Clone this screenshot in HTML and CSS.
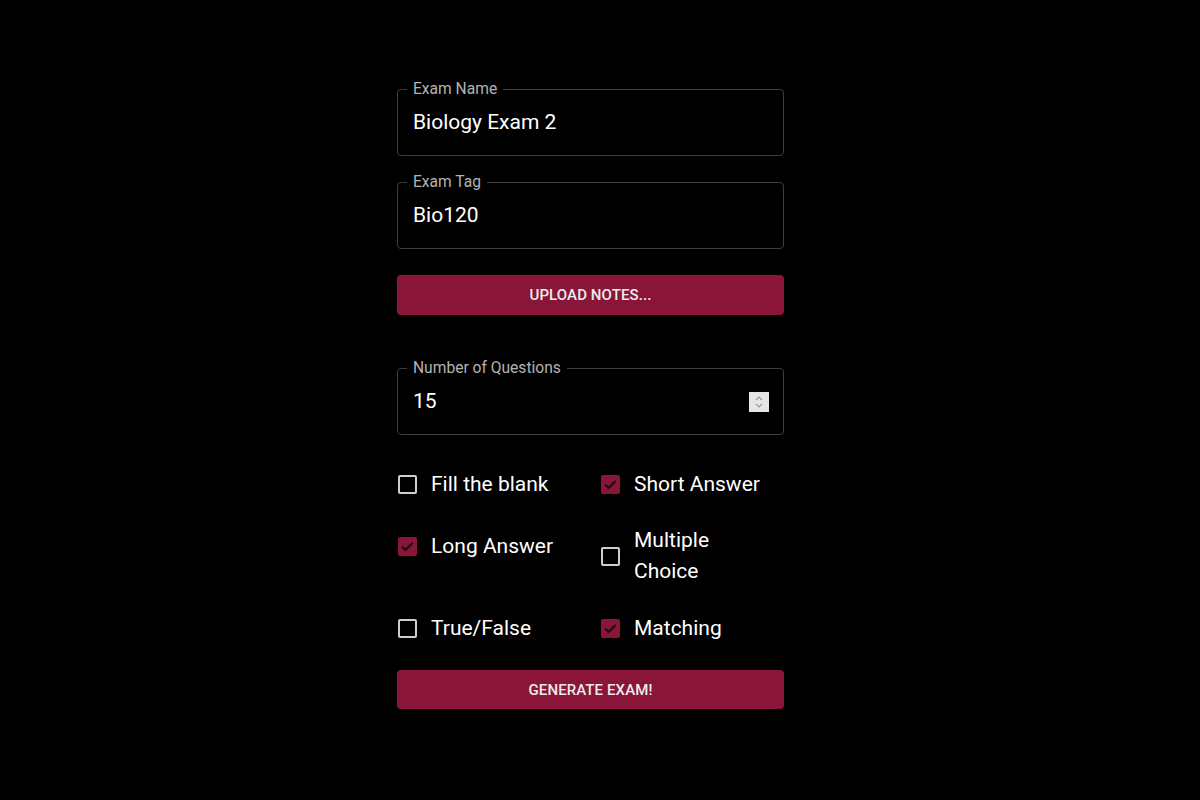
FILE: index.html
```html
<!DOCTYPE html>
<html lang="en">
<head>
    <meta charset="UTF-8">
    <meta name="viewport" content="width=device-width, initial-scale=1.0">
    <title>Exam Generator</title>
    <link rel="stylesheet" href="styles.css">
</head>
<body>
    <form class="exam-form">
        <fieldset class="field">
            <legend>Exam Name</legend>
            <input class="field-input" type="text" value="Biology Exam 2">
        </fieldset>

        <fieldset class="field field-tag">
            <legend>Exam Tag</legend>
            <input class="field-input" type="text" value="Bio120">
        </fieldset>

        <button type="button" class="btn btn-upload">Upload Notes...</button>

        <fieldset class="field field-count">
            <legend>Number of Questions</legend>
            <div class="number-row">
                <input class="field-input" type="text" value="15">
                <span class="spinner">
                    <svg width="20" height="20" viewBox="0 0 20 20">
                        <polyline points="7,8 10,5 13,8" fill="none" stroke="#9a9a9a" stroke-width="1.2"/>
                        <polyline points="7,12 10,15 13,12" fill="none" stroke="#9a9a9a" stroke-width="1.2"/>
                    </svg>
                </span>
            </div>
        </fieldset>

        <div class="types">
            <label class="type">
                <span class="box"></span>
                <span class="type-text">Fill the blank</span>
            </label>
            <label class="type">
                <span class="box checked">
                    <svg width="19" height="19" viewBox="0 0 19 19"><polyline points="4,9.5 7.5,13 14.5,6" fill="none" stroke="#111" stroke-width="2"/></svg>
                </span>
                <span class="type-text">Short Answer</span>
            </label>
            <label class="type">
                <span class="box checked">
                    <svg width="19" height="19" viewBox="0 0 19 19"><polyline points="4,9.5 7.5,13 14.5,6" fill="none" stroke="#111" stroke-width="2"/></svg>
                </span>
                <span class="type-text">Long Answer</span>
            </label>
            <label class="type">
                <span class="box"></span>
                <span class="type-text">Multiple Choice</span>
            </label>
            <label class="type">
                <span class="box"></span>
                <span class="type-text">True/False</span>
            </label>
            <label class="type">
                <span class="box checked">
                    <svg width="19" height="19" viewBox="0 0 19 19"><polyline points="4,9.5 7.5,13 14.5,6" fill="none" stroke="#111" stroke-width="2"/></svg>
                </span>
                <span class="type-text">Matching</span>
            </label>
        </div>

        <button type="button" class="btn btn-generate">Generate Exam!</button>
    </form>
</body>
</html>
```

FILE: styles.css
```css
* {
    box-sizing: border-box;
    margin: 0;
    padding: 0;
    font-family: Roboto, "Liberation Sans", sans-serif;
}

body {
    background-color: #000;
    color: #fff;
}

.exam-form {
    display: flex;
    flex-direction: column;
    width: 406px;
    margin: 0 auto;
    padding: 81px 19px 0 0;
}

.field {
    border: 1px solid #3d3d3d;
    border-radius: 4px;
    padding: 0 15px 21px 15px;
}

.field legend {
    color: #b3b3b3;
    font-size: 15.6px;
    line-height: 17px;
    padding: 0 6px;
    margin-left: -6px;
}

.field-input {
    display: block;
    width: 100%;
    background: transparent;
    border: none;
    outline: none;
    color: #fff;
    font-size: 21px;
    line-height: 24px;
    height: 24px;
    margin-top: 12px;
}

.field-tag {
    margin-top: 18px;
}

.field-count {
    margin-top: 45px;
}

.number-row {
    display: flex;
    align-items: flex-end;
}

.spinner {
    display: block;
    width: 20px;
    height: 20px;
    background-color: #e6e6e6;
    flex-shrink: 0;
    margin: 0 -1px 1px 0;
}

.spinner svg {
    display: block;
}

.btn {
    height: 40px;
    border: none;
    border-radius: 4px;
    background-color: #8a1538;
    color: #ececec;
    font-size: 15px;
    font-weight: 500;
    text-transform: uppercase;
    letter-spacing: 0.1px;
    cursor: pointer;
}

.btn-upload {
    margin-top: 26px;
}

.btn-generate {
    margin-top: 21px;
    height: 39px;
}

.types {
    display: grid;
    grid-template-columns: 203px 1fr;
    align-items: start;
    row-gap: 20px;
    margin-top: 28px;
}

.type {
    display: flex;
    align-items: center;
    gap: 14px;
    min-height: 42px;
    padding-right: 24px;
    font-size: 21px;
    line-height: 31px;
    color: #fff;
}

.box {
    display: block;
    width: 19px;
    height: 19px;
    margin-left: 1px;
    border: 2px solid #cfcfcf;
    border-radius: 2px;
    flex-shrink: 0;
}

.box.checked {
    border: none;
    background-color: #8a1538;
}

.box svg {
    display: block;
}
```
